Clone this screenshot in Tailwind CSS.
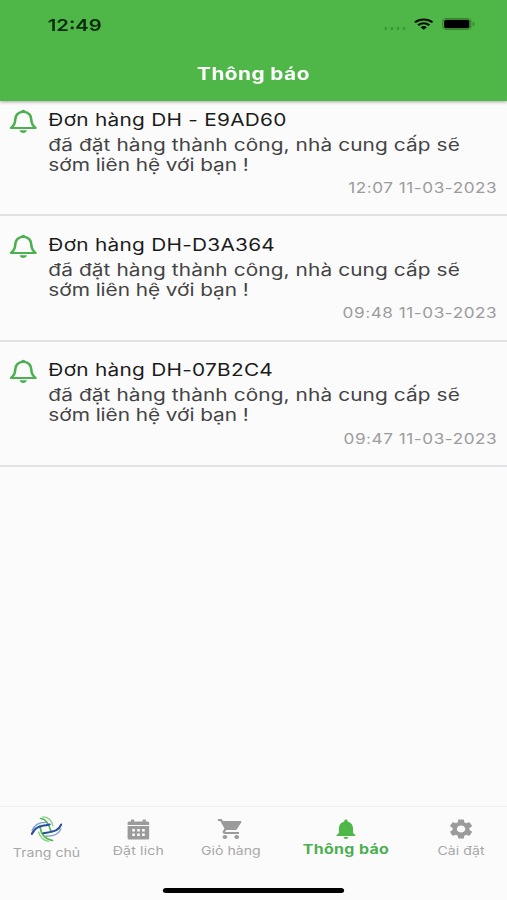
<!DOCTYPE html>
<html lang="vi">
<head>
    <meta charset="UTF-8">
    <meta name="viewport" content="width=device-width, initial-scale=1.0">
    <title>Thông báo</title>
    <script src="https://cdn.jsdelivr.net/npm/@tailwindcss/browser@4"></script>
</head>
<body class="overflow-hidden bg-[#fbfbfb] font-['Inter','Liberation_Sans',sans-serif]">
    <div class="flex h-[900px] w-[414px] origin-left scale-x-[1.2246] flex-col whitespace-nowrap bg-[#fbfbfb]">

        <!-- Status bar and title -->
        <header class="z-10 flex h-[101px] shrink-0 flex-col bg-[#4eb748] shadow-[0_1px_3px_rgba(0,0,0,0.35)]">
            <div class="flex h-12 items-center justify-between pl-[39px] pr-[26px]">
                <span class="mt-[2px] text-[16.5px] font-semibold text-[#0b2a0b]">12:49</span>
                <div class="flex items-center">
                    <div class="mr-[7px] mt-[9px] flex gap-[2.5px]">
                        <i class="size-[2.5px] rounded-full bg-[#3a9436]"></i>
                        <i class="size-[2.5px] rounded-full bg-[#3a9436]"></i>
                        <i class="size-[2.5px] rounded-full bg-[#3a9436]"></i>
                        <i class="size-[2.5px] rounded-full bg-[#3a9436]"></i>
                    </div>
                    <svg class="mr-[7px] h-3 w-4" viewBox="0 0 16 12" fill="none" stroke="#061006" stroke-width="2">
                        <path d="M.8 4.4a10.4 10.4 0 0 1 14.4 0M3.4 7.2a6.7 6.7 0 0 1 9.2 0" />
                        <path d="M8 11.8 5.4 9.2a3.8 3.8 0 0 1 5.2 0z" fill="#061006" stroke="none" />
                    </svg>
                    <svg class="h-3 w-[27px]" viewBox="0 0 27 12">
                        <rect x=".5" y=".5" width="23" height="11" rx="3" fill="none" stroke="#35852f" />
                        <rect x="1.7" y="1.7" width="20.6" height="8.6" rx="1.5" fill="#000" />
                        <path d="M25 4v4c2-.8 2-3.2 0-4z" fill="#35852f" />
                    </svg>
                </div>
            </div>
            <h1 class="mt-[14px] text-center text-[17px] leading-6 font-bold tracking-[0.35px] text-white">Thông báo</h1>
        </header>

        <!-- Notifications -->
        <main class="flex-1">
            <article class="flex h-[115px] border-b-2 border-[#e1e2e3] pl-[7px] pr-2 pt-[7px]">
                <svg class="mt-px size-6 shrink-0 overflow-visible" viewBox="0 0 24 24" fill="#4caf50">
                    <path d="M12 2.6c-4.600.8-6.600 4-6.600 8.400 0 4-1 5.500-3.400 8h20c-2.400-2.500-3.400-4-3.400-8 0-4.400-2-7.600-6.600-8.400z" fill="none" stroke="#4caf50" stroke-width="2.1" stroke-linejoin="round" />
                    <path d="M10.300 2.500a1.700 1.700 0 0 1 3.400 0zM9 21.300h6c-.4 1.700-1.400 2.600-3 2.600s-2.600-.9-3-2.600z" />
                </svg>
                <div class="ml-[8.5px] flex-1">
                    <h2 class="mt-px text-[17px] leading-[22px] tracking-[0.21px] text-[#1c1c1c]">Đơn hàng DH - E9AD60</h2>
                    <p class="mt-[4px] text-[17px] leading-[20px] tracking-[0.08px] text-[#444]">đã đặt hàng thành công, nhà cung cấp sẽ<br><span class="tracking-[-0.05px]">sớm liên hệ với bạn !</span></p>
                    <time class="mt-[4px] block text-right text-[14px] leading-[18px] tracking-[0.45px] text-[#9c9c9c]">12:07 11-03-2023</time>
                </div>
            </article>
            <article class="flex h-[125.5px] border-b-2 border-[#e1e2e3] pl-[7px] pr-2 pt-[17px]">
                <svg class="mt-px size-6 shrink-0 overflow-visible" viewBox="0 0 24 24" fill="#4caf50">
                    <path d="M12 2.6c-4.600.8-6.600 4-6.600 8.400 0 4-1 5.500-3.400 8h20c-2.400-2.500-3.400-4-3.400-8 0-4.400-2-7.600-6.600-8.400z" fill="none" stroke="#4caf50" stroke-width="2.1" stroke-linejoin="round" />
                    <path d="M10.300 2.500a1.700 1.700 0 0 1 3.400 0zM9 21.300h6c-.4 1.700-1.400 2.600-3 2.600s-2.600-.9-3-2.600z" />
                </svg>
                <div class="ml-[8.5px] flex-1">
                    <h2 class="mt-px text-[17px] leading-[22px] tracking-[0.21px] text-[#1c1c1c]">Đơn hàng DH-D3A364</h2>
                    <p class="mt-[4px] text-[17px] leading-[20px] tracking-[0.08px] text-[#444]">đã đặt hàng thành công, nhà cung cấp sẽ<br><span class="tracking-[-0.05px]">sớm liên hệ với bạn !</span></p>
                    <time class="mt-[4px] block text-right text-[14px] leading-[18px] tracking-[0.45px] text-[#9c9c9c]">09:48 11-03-2023</time>
                </div>
            </article>
            <article class="flex h-[125.5px] border-b-2 border-[#e1e2e3] pl-[7px] pr-2 pt-[17px]">
                <svg class="size-6 shrink-0 overflow-visible" viewBox="0 0 24 24" fill="#4caf50">
                    <path d="M12 2.6c-4.600.8-6.600 4-6.600 8.400 0 4-1 5.500-3.400 8h20c-2.400-2.500-3.400-4-3.400-8 0-4.400-2-7.600-6.600-8.400z" fill="none" stroke="#4caf50" stroke-width="2.1" stroke-linejoin="round" />
                    <path d="M10.300 2.500a1.700 1.700 0 0 1 3.400 0zM9 21.300h6c-.4 1.700-1.400 2.600-3 2.600s-2.600-.9-3-2.600z" />
                </svg>
                <div class="ml-[8.5px] flex-1">
                    <h2 class="text-[17px] leading-[22px] tracking-[0.21px] text-[#1c1c1c]">Đơn hàng DH-07B2C4</h2>
                    <p class="mt-[4px] text-[17px] leading-[20.5px] tracking-[0.08px] text-[#444]">đã đặt hàng thành công, nhà cung cấp sẽ<br><span class="tracking-[-0.05px]">sớm liên hệ với bạn !</span></p>
                    <time class="mt-[4px] block text-right text-[14px] leading-[18px] tracking-[0.45px] text-[#9c9c9c]">09:47 11-03-2023</time>
                </div>
            </article>
        </main>

        <!-- Bottom navigation -->
        <nav class="grid h-[94px] shrink-0 grid-cols-[76px_75px_75px_113px_75px] border-t border-[#f0f0f0] text-center text-[11.5px] leading-4 text-[#a8a8a8]">
            <a class="flex flex-col items-center pt-[9px]">
                <svg class="h-[26px] w-[26px]" viewBox="0 0 32 26" preserveAspectRatio="none" fill="none" stroke-linecap="round">
                    <path d="M10 2.500c5 0 8 4 10.500 13M9.500 10c.5 8 5 13 12.500 14.500" stroke="#52b84b" stroke-width="1.700" />
                    <path d="M12 .9c6 0 9 3 10.500 9M8 16c1.500 5 5 8.500 10 9.300" stroke="#8bcf86" stroke-width="1.300" />
                    <path d="M1.200 18c3-7 8-8 18-9.500M30.800 8.500c-3 7-8 7-18 8.800" stroke="#2a4f9f" stroke-width="2" />
                    <path d="M1.500 14.500c3-7 8-8.500 15-8M30.500 13c-3 6-8 7.500-15 7" stroke="#7a9dd3" stroke-width="1.300" />
                </svg>
                <span class="mt-[3px] tracking-[0.02px]">Trang chủ</span>
            </a>
            <a class="flex flex-col items-center pt-3 pr-px">
                <svg class="h-[21px] w-[18px]" viewBox="0 0 18 21" fill="#9b9b9b">
                    <path fill-rule="evenodd" d="M3 .5h2.500v2h7v-2H15v2h1.500Q18 2.500 18 4v2H0V4q0-1.500 1.500-1.500H3zM0 7h18v12q0 1.500-1.500 1.500h-15Q0 20.500 0 19zm4 3v2.500h2.200V10zm4 0v2.500h2.200V10zm4 0v2.500h2.200V10zm-8 4.500V17h2.200v-2.500zm4 0V17h2.200v-2.500zm4 0V17h2.200v-2.500z" />
                </svg>
                <span class="mt-[3px] tracking-[0.15px]">Đặt lich</span>
            </a>
            <a class="flex flex-col items-center pt-[10px]">
                <svg class="h-6 w-[23px]" viewBox="0 0 24 24" preserveAspectRatio="none" fill="#9b9b9b"><path d="M7 18c-1.100 0-1.990.9-1.990 2S5.900 22 7 22s2-.9 2-2-.9-2-2-2zM1 2v2h2l3.600 7.590-1.350 2.450c-.16.28-.25.61-.25.96 0 1.100.9 2 2 2h12v-2H7.420c-.14 0-.25-.11-.25-.25l.03-.12.9-1.630h7.450c.75 0 1.410-.41 1.750-1.030l3.580-6.490c.08-.14.12-.31.12-.48 0-.55-.45-1-1-1H5.210l-.94-2H1zm16 16c-1.100 0-1.990.9-1.990 2s.89 2 1.990 2 2-.9 2-2-.9-2-2-2z" /></svg>
                <span class="mt-[2px] tracking-[0.02px]">Giỏ hàng</span>
            </a>
            <a class="flex flex-col items-center pt-[10px] text-[#4caf50]">
                <svg class="h-6 w-[23px]" viewBox="0 0 24 24" preserveAspectRatio="none" fill="#4eb748"><path d="M12 22c1.100 0 2-.9 2-2h-4c0 1.100.89 2 2 2zm6-6v-5c0-3.070-1.640-5.640-4.500-6.320V4c0-.83-.67-1.500-1.500-1.500s-1.500.67-1.500 1.500v.68C7.630 5.360 6 7.920 6 11v5l-2 2v1h16v-1l-2-2z" /></svg>
                <span class="text-[13px] font-bold tracking-[0.3px]">Thông báo</span>
            </a>
            <a class="flex flex-col items-center pt-[10px]">
                <svg class="h-6 w-[23px]" viewBox="0 0 24 24" preserveAspectRatio="none" fill="#9b9b9b"><path d="M19.140 12.940c.04-.3.060-.61.060-.94 0-.32-.020-.64-.070-.94l2.030-1.580c.18-.14.23-.41.120-.61l-1.920-3.320c-.12-.22-.37-.29-.59-.22l-2.390.96c-.5-.38-1.030-.7-1.620-.94l-.36-2.540c-.04-.24-.24-.41-.48-.41h-3.840c-.24 0-.43.17-.47.41l-.36 2.540c-.59.24-1.130.57-1.620.94l-2.390-.96c-.22-.08-.47 0-.59.22L2.740 8.870c-.12.21-.08.470.120.610l2.030 1.580c-.05.3-.09.630-.09.940s.02.640.070.940l-2.030 1.580c-.18.14-.23.410-.12.610l1.920 3.320c.12.22.370.290.590.220l2.390-.96c.5.380 1.030.7 1.620.940l.36 2.540c.05.240.240.410.480.410h3.840c.24 0 .44-.17.470-.41l.36-2.540c.59-.24 1.130-.56 1.620-.94l2.390.96c.22.080.470 0 .590-.22l1.920-3.320c.12-.22.070-.47-.12-.61l-2.010-1.580zM12 15.600c-1.980 0-3.600-1.620-3.600-3.600s1.620-3.600 3.600-3.600 3.600 1.620 3.600 3.600-1.620 3.600-3.600 3.600z" /></svg>
                <span class="mt-[2px] tracking-[0.05px]">Cài đặt</span>
            </a>
            <div class="col-span-5 mx-auto mb-[7px] h-[5px] w-[148px] self-end rounded-full bg-black"></div>
        </nav>
    </div>
</body>
</html>
